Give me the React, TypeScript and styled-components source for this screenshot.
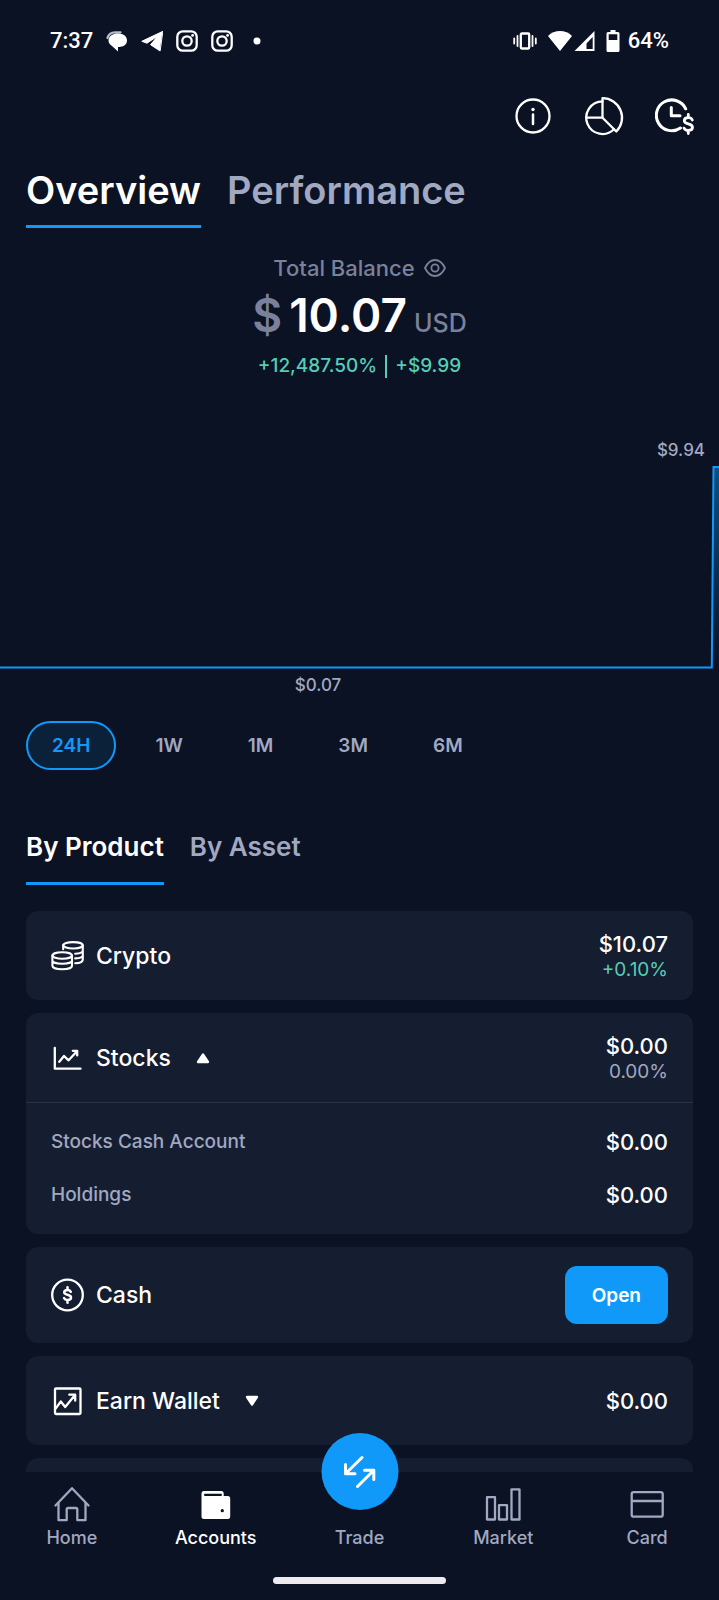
import React from "react";
import styled, { createGlobalStyle } from "styled-components";

const color = {
  bg: "#0a1224",
  card: "#151d31",
  line: "#2a3145",
  blue: "#1199fa",
  pill: "#0b2139",
  white: "#ffffff",
  grey: "#a1a8c1",
  dim: "#7b819a",
  green: "#56cdb6",
};

const GlobalStyle = createGlobalStyle`
  *, *::before, *::after { box-sizing: border-box; }
  body {
    margin: 0;
    background: ${color.bg};
    color: ${color.white};
    font-family: Inter, "Liberation Sans", sans-serif;
  }
  h1, h2, p, dl, dd, dt, ul { margin: 0; padding: 0; font-weight: inherit; }
  button { font-family: inherit; cursor: pointer; }
  svg { display: block; flex: none; }
`;

const Shell = styled.div`
  display: flex;
  flex-direction: column;
  height: 100vh;
`;

const Content = styled.main`
  flex: 1;
  min-height: 0;
  overflow-y: auto;
  scrollbar-width: none;
`;

const StatusBar = styled.div`
  display: flex;
  align-items: center;
  justify-content: space-between;
  height: 82px;
  padding: 0 50px;
  font: 500 22px/28px Roboto, sans-serif;
`;

const StatusGroup = styled.div<{ $gap: number }>`
  display: flex;
  align-items: center;
  gap: ${(p) => p.$gap}px;
`;

const Signals = styled.div`
  display: flex;
  align-items: center;
  gap: 2px;
`;

const Charge = styled.div`
  display: flex;
  align-items: center;
  gap: 8px;
`;

const Toolbar = styled.div`
  display: flex;
  align-items: center;
  justify-content: flex-end;
  gap: 31px;
  height: 68px;
  padding-right: 24px;
`;

const IconButton = styled.button<{ $dim?: boolean }>`
  padding: 0;
  border: 0;
  background: none;
  color: ${(p) => (p.$dim ? color.dim : color.white)};
`;

const TabList = styled.div<{ $top: number }>`
  display: flex;
  gap: 26px;
  margin: ${(p) => p.$top}px 26px 0;
`;

const Tab = styled.button<{ $active?: boolean }>`
  padding: 0 0 11px;
  border: 0;
  border-bottom: 3px solid ${(p) => (p.$active ? color.blue : "transparent")};
  background: none;
  color: ${(p) => (p.$active ? color.white : color.grey)};
  font-size: 38px;
  font-weight: 600;
  line-height: 48px;
`;

const SubTab = styled(Tab)`
  padding-bottom: 19px;
  font-size: 26px;
  line-height: 32px;
`;

const Balance = styled.section`
  display: flex;
  flex-direction: column;
  align-items: center;
  margin-top: 26px;
`;

const BalanceTitle = styled.h1`
  display: flex;
  align-items: center;
  gap: 9px;
  color: ${color.dim};
  font-size: 22px;
  font-weight: 500;
  line-height: 28px;
`;

const BalanceAmount = styled.p`
  display: flex;
  align-items: baseline;
  gap: 7px;
  margin-top: 5px;
  font-size: 46px;
  font-weight: 600;
  line-height: 56px;
`;

const Symbol = styled.span`
  color: ${color.dim};
`;

const Currency = styled.span`
  color: ${color.dim};
  font-size: 25px;
  font-weight: 500;
`;

const BalanceChange = styled.p`
  display: flex;
  align-items: center;
  gap: 8px;
  margin-top: 2px;
  color: ${color.green};
  font-size: 19px;
  font-weight: 500;
  line-height: 26px;
`;

const Divider = styled.span`
  width: 2px;
  height: 23px;
  background: ${color.green};
`;

const Chart = styled.section`
  margin-top: 59px;
  color: ${color.grey};
  font-size: 17px;
  font-weight: 500;
  line-height: 24px;
`;

const HighLabel = styled.p`
  padding-right: 14px;
  text-align: right;
`;

const LowLabel = styled.p`
  padding-left: 41%;
`;

const Ranges = styled.div`
  display: flex;
  gap: 13px;
  margin: 24px 26px 0;
`;

const Range = styled.button<{ $active?: boolean }>`
  height: 49px;
  padding: 0 24px;
  border: 2px solid ${(p) => (p.$active ? color.blue : "transparent")};
  border-radius: 25px;
  background: ${(p) => (p.$active ? color.pill : "none")};
  color: ${(p) => (p.$active ? color.blue : color.grey)};
  font-size: 19px;
  font-weight: 600;
  line-height: 24px;
`;

const Products = styled.ul`
  display: flex;
  flex-direction: column;
  gap: 13px;
  margin: 26px 26px 0;
  list-style: none;
`;

const Card = styled.li`
  border-radius: 12px;
  background: ${color.card};
`;

const CardRow = styled.div`
  display: flex;
  align-items: center;
  gap: 11px;
  min-height: 89px;
  padding: 19px 25px;
`;

const Name = styled.h2`
  font-size: 23px;
  font-weight: 500;
  line-height: 30px;
`;

const Toggle = styled.button`
  margin-left: 14px;
  padding: 0;
  border: 0;
  background: none;
  color: ${color.white};
`;

const Values = styled.div`
  margin-left: auto;
  text-align: right;
`;

const Amount = styled.p`
  font-size: 22px;
  font-weight: 500;
  line-height: 28px;
`;

const Percent = styled.p<{ $up?: boolean }>`
  color: ${(p) => (p.$up ? color.green : color.grey)};
  font-size: 19px;
  line-height: 23px;
`;

const Details = styled.dl`
  display: flex;
  flex-direction: column;
  gap: 25px;
  padding: 25px;
  border-top: 1px solid ${color.line};
`;

const DetailRow = styled.div`
  display: flex;
  align-items: center;
  justify-content: space-between;
`;

const DetailName = styled.dt`
  color: ${color.grey};
  font-size: 19px;
  font-weight: 500;
  line-height: 28px;
`;

const DetailValue = styled.dd`
  font-size: 22px;
  font-weight: 500;
  line-height: 28px;
`;

const OpenButton = styled.button`
  margin-left: auto;
  height: 58px;
  padding: 0 27px;
  border: 0;
  border-radius: 12px;
  background: ${color.blue};
  color: ${color.white};
  font-size: 19px;
  font-weight: 600;
`;

const BottomNav = styled.nav`
  position: relative;
  display: flex;
  flex-wrap: wrap;
  padding: 14px 0 16px;
  background: ${color.bg};
`;

const NavItem = styled.a<{ $active?: boolean }>`
  display: flex;
  flex: 1;
  flex-direction: column;
  align-items: center;
  justify-content: flex-end;
  gap: 5px;
  color: ${(p) => (p.$active ? color.white : color.grey)};
  font-size: 18px;
  font-weight: 500;
  line-height: 22px;
  text-decoration: none;
`;

const TradeDisc = styled.span`
  position: absolute;
  top: -39px;
  left: 50%;
  display: block;
  transform: translateX(-50%);
  border-radius: 50%;
  background: ${color.blue};
  color: ${color.white};
`;

const HomeBar = styled.div`
  flex: none;
  width: 24%;
  height: 7px;
  margin: 28px 38% 0;
  border-radius: 4px;
  background: #edebf0;
`;

type IconProps = {
  w: number;
  h?: number;
  stroke?: number;
  children: React.ReactNode;
};

const Icon = ({ w, h = w, stroke = 2.3, children }: IconProps) => (
  <svg
    width={w}
    height={h}
    viewBox={`0 0 ${w} ${h}`}
    fill="none"
    stroke="currentColor"
    strokeWidth={stroke}
    strokeLinecap="round"
    strokeLinejoin="round"
    aria-hidden="true"
  >
    {children}
  </svg>
);

const MessagesIcon = () => (
  <Icon w={22}>
    <path d="M1.500 8C2.500 4 5.500 2.300 9 2.300h5.500" stroke="#b9bdc9" />
    <path
      d="M12 3.500C17 3.500 21 6 21 10.500S17 17 12 17V21.500L6 16C3.500 14.500 2.500 12.500 2.500 10.500 2.500 6 7 3.500 12 3.500Z"
      fill="currentColor"
      stroke="none"
    />
  </Icon>
);

const TelegramIcon = () => (
  <Icon w={22}>
    <path
      d="M21.500 1.500 .8 11.300 6 13.200 17 5.800 9.500 14.700 18.800 20.800Z"
      fill="currentColor"
      strokeWidth="1"
    />
  </Icon>
);

const InstagramIcon = () => (
  <Icon w={22}>
    <rect x="1.300" y="1.300" width="19.400" height="19.400" rx="5.500" />
    <circle cx="11" cy="11" r="4.700" />
    <circle cx="16.600" cy="5.400" r="1.400" fill="currentColor" stroke="none" />
  </Icon>
);

const DotIcon = () => (
  <Icon w={22}>
    <circle cx="11" cy="11" r="3.500" fill="currentColor" stroke="none" />
  </Icon>
);

const VibrateIcon = () => (
  <Icon w={24} h={18}>
    <rect x="7.800" y="1.500" width="8.400" height="15" rx="1" />
    <path d="M4.500 4v10M19.500 4v10M1.200 6.500v5M22.800 6.500v5" strokeWidth="1.800" />
  </Icon>
);

const WifiIcon = () => (
  <Icon w={24} h={20}>
    <path d="M0 5C3 1.800 7.500 0 12 0s9 1.800 12 5L12 20Z" fill="currentColor" stroke="none" />
  </Icon>
);

const CellIcon = () => (
  <Icon w={21} h={20}>
    <path
      d="M20.500 0v20H.5ZM18.700 6 12.500 12.500V18h6.200Z"
      fill="currentColor"
      fillRule="evenodd"
      stroke="none"
    />
  </Icon>
);

const BatteryIcon = () => (
  <Icon w={14} h={22}>
    <path
      d="M4.500 0h5v2H12q1.500 0 1.500 1.500v17q0 1.500-1.500 1.500H2Q.5 22 .5 20.500v-17Q.5 2 2 2h2.500ZM2.700 4.300V10h8.600V4.300Z"
      fill="currentColor"
      fillRule="evenodd"
      stroke="none"
    />
  </Icon>
);

const InfoIcon = () => (
  <Icon w={40}>
    <circle cx="20" cy="20" r="16.500" />
    <path d="M20 18.500v9.500" strokeWidth="2.500" />
    <circle cx="20" cy="13.500" r="1.700" fill="currentColor" stroke="none" />
  </Icon>
);

const PieIcon = () => (
  <Icon w={40}>
    <path d="M18.500 5.400A16.300 16.300 0 1 0 30 33.300M18.500 21.700H2.200" />
    <path d="M18.500 21.700V2.200A19.500 19.500 0 0 1 32.300 35.500Z" />
  </Icon>
);

const ClockDollarIcon = () => (
  <Icon w={40} stroke={3}>
    <path d="M30.700 12.800A15.400 15.400 0 1 0 25.500 32" />
    <path d="M16.300 11.500v8.200H25" />
    <path
      d="M37.300 24c-.8-1.700-2.200-2.300-4-2.300-2.300 0-4 1.200-4 3 0 1.900 1.700 2.600 4 3.200 2.400.6 4.200 1.400 4.200 3.400 0 1.900-1.800 3.100-4.200 3.100-2 0-3.500-.7-4.300-2.300M33.300 18.500v3M33.300 34.500v3"
      strokeWidth="2.800"
    />
  </Icon>
);

const EyeIcon = () => (
  <Icon w={22} h={18} stroke={1.8}>
    <path d="M1 9C3.500 3.800 7 1 11 1s7.500 2.800 10 8c-2.500 5.200-6 8-10 8S3.500 14.200 1 9Z" />
    <circle cx="11" cy="9" r="3.600" />
  </Icon>
);

const CoinsIcon = () => (
  <Icon w={34} stroke={2.100}>
    <ellipse cx="22" cy="6.300" rx="9.800" ry="3.200" />
    <path d="M12.200 6.300v4M31.800 6.300V20.500c0 2-3 3.600-7.600 3.800M31.800 11.500c0 1.700-3 3-7.600 3.200M31.800 16.200c0 1.700-3 3-7.600 3.200" />
    <ellipse cx="11.200" cy="16.500" rx="9.800" ry="3.200" />
    <path d="M1.400 16.500V26.800c0 2 4 3.500 9.800 3.500S21 28.800 21 26.800V16.500M1.400 21.500c0 1.900 4 3.300 9.800 3.300S21 23.400 21 21.500" />
  </Icon>
);

const StocksIcon = () => (
  <Icon w={34}>
    <path d="M3.800 6.800V27.700H29.500M8.300 20.800l4.700-5.800 4.600 4.300 8.200-8.800M21.800 9.800h4.400v4.600" />
  </Icon>
);

const CashIcon = () => (
  <Icon w={34}>
    <circle cx="16.500" cy="17" r="15.300" />
    <path
      d="M19.800 13.800c-.7-1.300-1.800-1.800-3.300-1.800-1.900 0-3.300.9-3.300 2.300 0 1.500 1.400 2 3.300 2.500 2 .5 3.500 1.200 3.500 2.700 0 1.500-1.500 2.500-3.500 2.500-1.600 0-2.900-.6-3.500-1.900M16.500 9.200V12M16.500 22v2.800"
      strokeWidth="2.500"
    />
  </Icon>
);

const EarnIcon = () => (
  <Icon w={34}>
    <rect x="4" y="4.500" width="25.500" height="25.500" rx="1" />
    <path d="M5 24.200l4.800-6.700 4.400 5.500L24 11M18.300 10.700h5.900v6" />
  </Icon>
);

const Triangle = ({ down }: { down?: boolean }) => (
  <Icon w={14} h={12}>
    <path
      d={down ? "M2 2h10L7 9.500Z" : "M2 10h10L7 2.500Z"}
      fill="currentColor"
    />
  </Icon>
);

const HomeIcon = () => (
  <Icon w={36}>
    <path d="M1.500 19.500 18 2.200 34.500 19.500" />
    <path d="M4.500 17V34.200h8.200V23.500q0-1.500 1.500-1.500h7.600q1.500 0 1.500 1.500V34.200h8.200V17" />
  </Icon>
);

const WalletIcon = () => (
  <Icon w={36}>
    <path
      d="M6 5H23.200q2.500 0 2.500 2.500V10h4q2.500 0 2.500 2.500V30.500q0 2.500-2.500 2.500H6q-2.500 0-2.500-2.500V7.500Q3.500 5 6 5ZM7 7.800q-1 0-1 1.100t1 1.100H23.700V7.800Z"
      fill="currentColor"
      fillRule="evenodd"
      stroke="none"
    />
    <circle cx="24.300" cy="24.700" r="1.600" fill={color.bg} stroke="none" />
  </Icon>
);

const MarketIcon = () => (
  <Icon w={36}>
    <path d="M2 11.200h8V33.500H2ZM14 19.200h8V33.500h-8ZM26.500 3.300h8V33.500h-8Z" />
  </Icon>
);

const CardIcon = () => (
  <Icon w={36}>
    <rect x="2.700" y="6.200" width="31" height="24.500" rx="2" />
    <path d="M3 15H33.500" />
  </Icon>
);

const TradeIcon = () => (
  <Icon w={77} stroke={3}>
    <path d="M40.500 24.500 24 40.700M24 31.500V40.700H33.500" />
    <path d="M36 53.500 52.300 37.300M43 37.300H52.300V46.500" />
  </Icon>
);

const BalanceChart = () => (
  <svg
    width="100%"
    height="211"
    viewBox="0 0 719 211"
    preserveAspectRatio="none"
    role="img"
    aria-label="Balance over 24 hours"
  >
    <defs>
      <linearGradient id="area" x1="0" y1="0" x2="0" y2="1">
        <stop offset="0" stopColor={color.blue} stopOpacity="0.45" />
        <stop offset="1" stopColor={color.blue} stopOpacity="0" />
      </linearGradient>
    </defs>
    <path d="M712 205.500 713.500 5H719V205.500Z" fill="url(#area)" />
    <path
      d="M0 205.500H711.800L713.500 5H719"
      fill="none"
      stroke={color.blue}
      strokeWidth="2"
      vectorEffect="non-scaling-stroke"
    />
  </svg>
);

const ranges = ["24H", "1W", "1M", "3M", "6M"];

export default function App() {
  return (
    <>
      <GlobalStyle />
      <Shell>
        <Content>
          <StatusBar>
            <StatusGroup $gap={13}>
              <span>7:37</span>
              <MessagesIcon />
              <TelegramIcon />
              <InstagramIcon />
              <InstagramIcon />
              <DotIcon />
            </StatusGroup>
            <StatusGroup $gap={11}>
              <VibrateIcon />
              <Signals>
                <WifiIcon />
                <CellIcon />
              </Signals>
              <Charge>
                <BatteryIcon />
                <span>64%</span>
              </Charge>
            </StatusGroup>
          </StatusBar>

          <Toolbar>
            <IconButton aria-label="Information">
              <InfoIcon />
            </IconButton>
            <IconButton aria-label="Allocation">
              <PieIcon />
            </IconButton>
            <IconButton aria-label="Transaction history">
              <ClockDollarIcon />
            </IconButton>
          </Toolbar>

          <TabList $top={16} role="tablist">
            <Tab $active role="tab" aria-selected="true">
              Overview
            </Tab>
            <Tab role="tab" aria-selected="false">
              Performance
            </Tab>
          </TabList>

          <Balance>
            <BalanceTitle>
              Total Balance
              <IconButton $dim aria-label="Hide balance">
                <EyeIcon />
              </IconButton>
            </BalanceTitle>
            <BalanceAmount>
              <Symbol>$</Symbol>
              <span>10.07</span>
              <Currency>USD</Currency>
            </BalanceAmount>
            <BalanceChange>
              <span>+12,487.50%</span>
              <Divider />
              <span>+$9.99</span>
            </BalanceChange>
          </Balance>

          <Chart>
            <HighLabel>$9.94</HighLabel>
            <BalanceChart />
            <LowLabel>$0.07</LowLabel>
          </Chart>

          <Ranges>
            {ranges.map((range, i) => (
              <Range key={range} $active={i === 0} aria-pressed={i === 0}>
                {range}
              </Range>
            ))}
          </Ranges>

          <TabList $top={61} role="tablist">
            <SubTab $active role="tab" aria-selected="true">
              By Product
            </SubTab>
            <SubTab role="tab" aria-selected="false">
              By Asset
            </SubTab>
          </TabList>

          <Products>
            <Card>
              <CardRow>
                <CoinsIcon />
                <Name>Crypto</Name>
                <Values>
                  <Amount>$10.07</Amount>
                  <Percent $up>+0.10%</Percent>
                </Values>
              </CardRow>
            </Card>
            <Card>
              <CardRow>
                <StocksIcon />
                <Name>Stocks</Name>
                <Toggle aria-label="Collapse Stocks" aria-expanded="true">
                  <Triangle />
                </Toggle>
                <Values>
                  <Amount>$0.00</Amount>
                  <Percent>0.00%</Percent>
                </Values>
              </CardRow>
              <Details>
                <DetailRow>
                  <DetailName>Stocks Cash Account</DetailName>
                  <DetailValue>$0.00</DetailValue>
                </DetailRow>
                <DetailRow>
                  <DetailName>Holdings</DetailName>
                  <DetailValue>$0.00</DetailValue>
                </DetailRow>
              </Details>
            </Card>
            <Card>
              <CardRow>
                <CashIcon />
                <Name>Cash</Name>
                <OpenButton>Open</OpenButton>
              </CardRow>
            </Card>
            <Card>
              <CardRow>
                <EarnIcon />
                <Name>Earn Wallet</Name>
                <Toggle aria-label="Expand Earn Wallet" aria-expanded="false">
                  <Triangle down />
                </Toggle>
                <Values>
                  <Amount>$0.00</Amount>
                </Values>
              </CardRow>
            </Card>
            <Card>
              <CardRow />
            </Card>
          </Products>
        </Content>

        <BottomNav>
          <NavItem href="#home">
            <HomeIcon />
            Home
          </NavItem>
          <NavItem href="#accounts" $active aria-current="page">
            <WalletIcon />
            Accounts
          </NavItem>
          <NavItem href="#trade">
            <TradeDisc>
              <TradeIcon />
            </TradeDisc>
            Trade
          </NavItem>
          <NavItem href="#market">
            <MarketIcon />
            Market
          </NavItem>
          <NavItem href="#card">
            <CardIcon />
            Card
          </NavItem>
          <HomeBar />
        </BottomNav>
      </Shell>
    </>
  );
}
